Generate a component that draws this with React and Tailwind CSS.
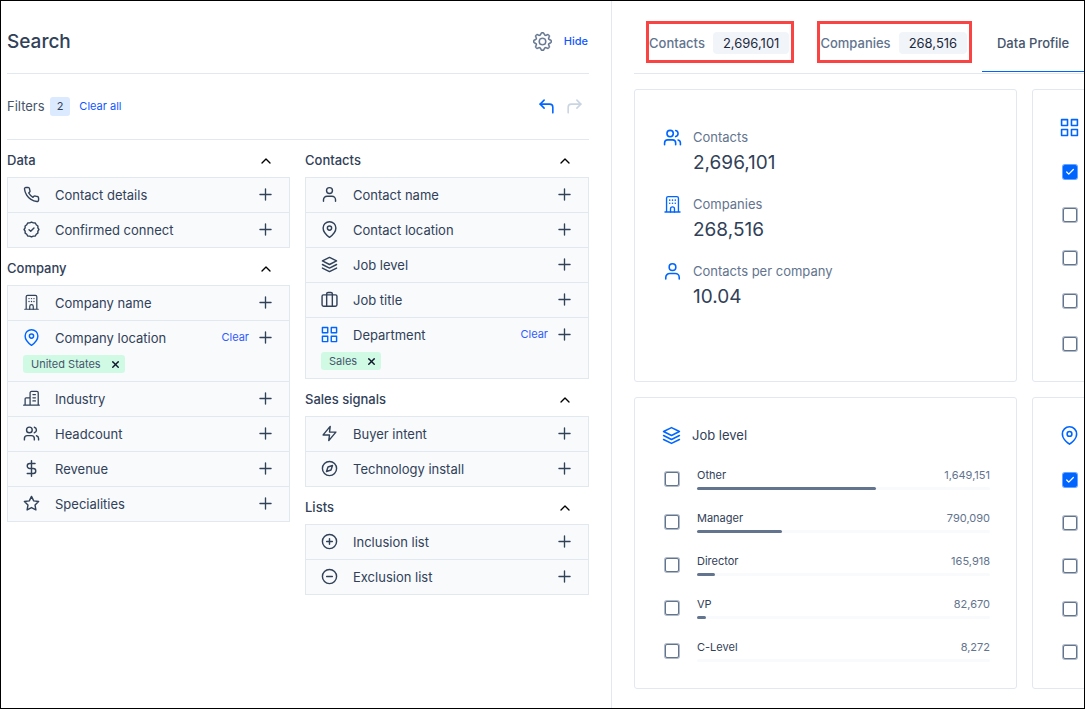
import { Users, Plus, X, ChevronUp, Check } from 'lucide-react';
import {
  FiPhone, FiMapPin, FiLayers, FiZap, FiCompass, FiPlusCircle, FiMinusCircle,
  FiDollarSign, FiStar, FiCornerUpLeft, FiCornerUpRight,
} from 'react-icons/fi';
import { BsGear } from 'react-icons/bs';

function Svg({ children, className, strokeWidth = 2 }) {
  return (
    <svg
      className={className}
      viewBox="0 0 24 24"
      fill="none"
      stroke="currentColor"
      strokeWidth={strokeWidth}
      strokeLinecap="round"
      strokeLinejoin="round"
      aria-hidden="true"
    >
      {children}
    </svg>
  );
}

function Person({ className }) {
  return (
    <Svg className={className}>
      <circle cx="12" cy="6.5" r="4.2" />
      <path d="M3.5 21.500v-2a5 5 0 0 1 5-5h7a5 5 0 0 1 5 5v2" />
    </Svg>
  );
}

function Building({ className }) {
  return (
    <Svg className={className} strokeWidth={1.7}>
      <path d="M2.500 21.500h19M4.500 21.500V4a2 2 0 0 1 2-2h11a2 2 0 0 1 2 2v17.500" />
      <path d="M9.500 21.500v-4a2.500 2.500 0 0 1 5 0v4" />
      <path d="M8.500 6.500h.01M12 6.500h.01M15.500 6.500h.01M8.500 10.500h.01M12 10.500h.01M15.500 10.500h.01" strokeWidth="2" />
    </Svg>
  );
}

function Industry({ className }) {
  return (
    <Svg className={className} strokeWidth={1.8}>
      <path d="M1 21.500h22M3 21.500V12.500a1.500 1.500 0 0 1 1.500-1.500H10M10 21.500V4a2 2 0 0 1 2-2h7.500a2 2 0 0 1 2 2v17.500" />
      <path d="M14 6.500h3.500M14 11h3.500M14 15.500h3.500" />
    </Svg>
  );
}

function Briefcase({ className }) {
  return (
    <Svg className={className}>
      <rect x="1.500" y="5.500" width="21" height="16" rx="2" />
      <path d="M8 21.500V4a2 2 0 0 1 2-2h4a2 2 0 0 1 2 2v17.500" />
    </Svg>
  );
}

function Grid({ className }) {
  return (
    <Svg className={className}>
      <path d="M2 2h7.500v7.500H2zM14.500 2H22v7.500h-7.500zM2 14.500h7.500V22H2zM14.500 14.500H22V22h-7.500z" />
    </Svg>
  );
}

function Verified({ className }) {
  return (
    <Svg className={className}>
      <path d="M12 1.500l2.600 1.200 2.800.1 1.300 2.500 2.300 1.700v2.800L22.500 12 21 14.300v2.800l-2.300 1.600-1.300 2.500-2.800.1L12 22.500l-2.600-1.200-2.800-.1-1.300-2.500L3 17.100v-2.800L1.500 12 3 9.800V7l2.300-1.700 1.300-2.500 2.800-.1z" />
      <path d="m8.500 12.200 2.400 2.300 4.600-4.700" />
    </Svg>
  );
}

const LEFT_GROUPS = [
  {
    title: 'Data',
    items: [
      { icon: FiPhone, label: 'Contact details' },
      { icon: Verified, label: 'Confirmed connect' },
    ],
  },
  {
    title: 'Company',
    items: [
      { icon: Building, label: 'Company name' },
      { icon: FiMapPin, label: 'Company location', tag: 'United States' },
      { icon: Industry, label: 'Industry' },
      { icon: Users, label: 'Headcount' },
      { icon: FiDollarSign, label: 'Revenue' },
      { icon: FiStar, label: 'Specialities' },
    ],
  },
];

const RIGHT_GROUPS = [
  {
    title: 'Contacts',
    items: [
      { icon: Person, label: 'Contact name' },
      { icon: FiMapPin, label: 'Contact location' },
      { icon: FiLayers, label: 'Job level' },
      { icon: Briefcase, label: 'Job title' },
      { icon: Grid, label: 'Department', tag: 'Sales' },
    ],
  },
  {
    title: 'Sales signals',
    items: [
      { icon: FiZap, label: 'Buyer intent' },
      { icon: FiCompass, label: 'Technology install' },
    ],
  },
  {
    title: 'Lists',
    items: [
      { icon: FiPlusCircle, label: 'Inclusion list' },
      { icon: FiMinusCircle, label: 'Exclusion list' },
    ],
  },
];

const STATS = [
  { icon: Users, label: 'Contacts', value: '2,696,101' },
  { icon: Building, label: 'Companies', value: '268,516' },
  { icon: Person, label: 'Contacts per company', value: '10.04' },
];

const JOB_LEVELS = [
  { label: 'Other', value: '1,649,151', percent: 61 },
  { label: 'Manager', value: '790,090', percent: 29 },
  { label: 'Director', value: '165,918', percent: 6 },
  { label: 'VP', value: '82,670', percent: 3 },
  { label: 'C-Level', value: '8,272', percent: 0 },
];

function FilterRow({ icon: Icon, label, tag }) {
  return (
    <li className="border-b border-slate-200">
      <div className="flex h-[34px] items-center pb-0.5 pl-[15px] pr-[14px]">
        <Icon className={tag ? 'size-[17px] text-[#0065ff]' : 'size-[17px] text-slate-700'} />
        <span className="ml-[15px] flex-1 pt-px text-[13px] leading-5 text-slate-700">{label}</span>
        {tag && (
          <button type="button" className="mr-[7px] text-[11px] text-[#2f5bff]">Clear</button>
        )}
        <button type="button" aria-label={`Add ${label}`} className="text-slate-700">
          <Plus className="size-[19px]" strokeWidth={1.7} />
        </button>
      </div>
      {tag && (
        <div className="flex h-[26px] pl-[15px]">
          <span className="flex h-[18px] items-center gap-[9px] rounded-[3px] bg-[#d1fae5] pl-2 pr-1 text-[11px] text-slate-600">
            {tag}
            <button type="button" aria-label={`Remove ${tag}`} className="text-slate-900">
              <X className="size-[11px]" strokeWidth={3} />
            </button>
          </span>
        </div>
      )}
    </li>
  );
}

function FilterGroup({ title, items }) {
  return (
    <section>
      <h2 className="text-[13px] font-medium text-slate-700">
        <button type="button" className="flex h-[37px] w-full items-center justify-between pr-4 pt-1">
          {title}
          <ChevronUp className="size-4 text-black" />
        </button>
      </h2>
      <ul className="border-x border-t border-slate-200 bg-slate-50">
        {items.map((item) => (
          <FilterRow key={item.label} {...item} />
        ))}
      </ul>
    </section>
  );
}

function Checkbox(props) {
  return (
    <span className="relative block size-4 shrink-0 p-px">
      <input
        type="checkbox"
        className="peer block size-[14px] appearance-none rounded-[2px] border border-slate-500 bg-white ring-1 ring-slate-500/50 checked:border-[#0065ff] checked:bg-[#0065ff] checked:ring-[#0065ff]/60"
        {...props}
      />
      <Check className="pointer-events-none absolute left-[3px] top-[3px] hidden size-[10px] text-white peer-checked:block" strokeWidth={3} />
    </span>
  );
}

function Card({ children }) {
  return <section className="rounded-[3px] border border-slate-200 pl-[27px] pr-[26px]">{children}</section>;
}

// Facet card that runs past the right edge of the window
function CheckColumn({ icon: Icon, name }) {
  return (
    <Card>
      <div className="flex h-[74px] items-center">
        <Icon className="size-[19px] text-[#0065ff]" />
      </div>
      {[0, 1, 2, 3, 4].map((i) => (
        <div key={i} className="flex h-[43px] pl-0.5">
          <Checkbox defaultChecked={i === 0} aria-label={`${name} ${i + 1}`} />
        </div>
      ))}
    </Card>
  );
}

function Tab({ label, count }) {
  return (
    <button type="button" role="tab" aria-selected="false" className="relative flex items-center gap-2 text-[13px] leading-[22px] font-medium text-slate-500">
      {label}
      <span className="rounded-[4px] bg-slate-100 px-[10px] font-normal text-slate-800">{count}</span>
      <span className="absolute -left-[3px] -right-[5px] -top-[11px] -bottom-[9px] border-3 border-[#fa4444]" />
    </button>
  );
}

export default function App() {
  return (
    <div className="flex min-h-screen overflow-hidden border border-black bg-white font-[Inter,sans-serif] text-slate-700">
      <aside className="w-[611px] shrink-0 border-r border-slate-200 pl-[6px] pr-[22px]">
        <header className="flex h-[73px] items-center justify-between border-b border-slate-200 pt-2 pr-px">
          <h1 className="pt-px text-[19px] leading-7 font-medium">Search</h1>
          <div className="flex items-center gap-3">
            <button type="button" aria-label="Settings" className="text-slate-500">
              <BsGear className="size-[19px]" strokeWidth={0.3} />
            </button>
            <button type="button" className="text-[11px] font-medium text-[#0f56ff]">Hide</button>
          </div>
        </header>

        <div className="flex h-[66px] items-center justify-between border-b border-slate-200">
          <div className="flex items-center">
            <span className="text-[13px] text-slate-600">Filters</span>
            <span className="ml-[5px] rounded-[3px] bg-blue-100 px-[7px] text-[11px] leading-[19px]">2</span>
            <button type="button" className="ml-[9px] text-[11px] text-[#0f56ff]">Clear all</button>
          </div>
          <div className="flex gap-[9px] pr-[5px]">
            <button type="button" aria-label="Undo" className="text-[#0065ff]">
              <FiCornerUpLeft className="size-[19px]" />
            </button>
            <button type="button" aria-label="Redo" className="text-slate-300">
              <FiCornerUpRight className="size-[19px]" />
            </button>
          </div>
        </div>

        <div className="grid grid-cols-[283fr_284fr] gap-[15px]">
          <div>
            {LEFT_GROUPS.map((group) => (
              <FilterGroup key={group.title} {...group} />
            ))}
          </div>
          <div>
            {RIGHT_GROUPS.map((group) => (
              <FilterGroup key={group.title} {...group} />
            ))}
          </div>
        </div>
      </aside>

      <main className="min-w-0 flex-1 overflow-hidden pl-[22px]">
        <div role="tablist" className="flex h-[73px] border-b border-slate-200 pl-[15px]">
          <div className="flex items-center gap-[31px] pt-3">
            <Tab label="Contacts" count="2,696,101" />
            <Tab label="Companies" count="268,516" />
          </div>
          <button type="button" role="tab" aria-selected="true" className="mb-px ml-[15px] flex-1 border-b border-[#0065ff] px-[14px] pt-[15px] text-[13px] font-medium whitespace-nowrap text-slate-600">
            Data Profile
          </button>
        </div>

        <div className="mt-[15px] grid grid-cols-[383px_383px] grid-rows-[293px_292px] gap-[15px]">
          <Card>
            <dl className="grid gap-[17px] pt-[37px]">
              {STATS.map(({ icon: Icon, label, value }) => (
                <div key={label} className="grid grid-cols-[20px_1fr] gap-x-[11px]">
                  <dt className="col-span-2 grid grid-cols-subgrid items-center text-[13px] leading-5 text-slate-500">
                    <Icon className="size-[19px] justify-self-end text-[#0065ff]" />
                    {label}
                  </dt>
                  <dd className="col-start-2 pt-[2px] text-[19px] leading-7">{value}</dd>
                </div>
              ))}
            </dl>
          </Card>
          <CheckColumn icon={Grid} name="Department" />

          <Card>
            <h2 className="flex h-[69px] items-center gap-[11px] pt-[6px] text-[13px]">
              <FiLayers className="size-[19px] text-[#0065ff]" />
              Job level
            </h2>
            {JOB_LEVELS.map(({ label, value, percent }) => (
              <label key={label} className="flex h-[43px] gap-[17px] pl-0.5">
                <span className="pt-1">
                  <Checkbox />
                </span>
                <span className="flex-1">
                  <span className="flex justify-between text-[11px] leading-4">
                    <span>{label}</span>
                    <span className="text-slate-500">{value}</span>
                  </span>
                  <span className="mt-1 block h-[3px] rounded-full bg-slate-50">
                    <span className="block h-[3px] rounded-full bg-slate-500" style={{ width: `${percent}%` }} />
                  </span>
                </span>
              </label>
            ))}
          </Card>
          <CheckColumn icon={FiMapPin} name="Location" />
        </div>
      </main>
    </div>
  );
}
